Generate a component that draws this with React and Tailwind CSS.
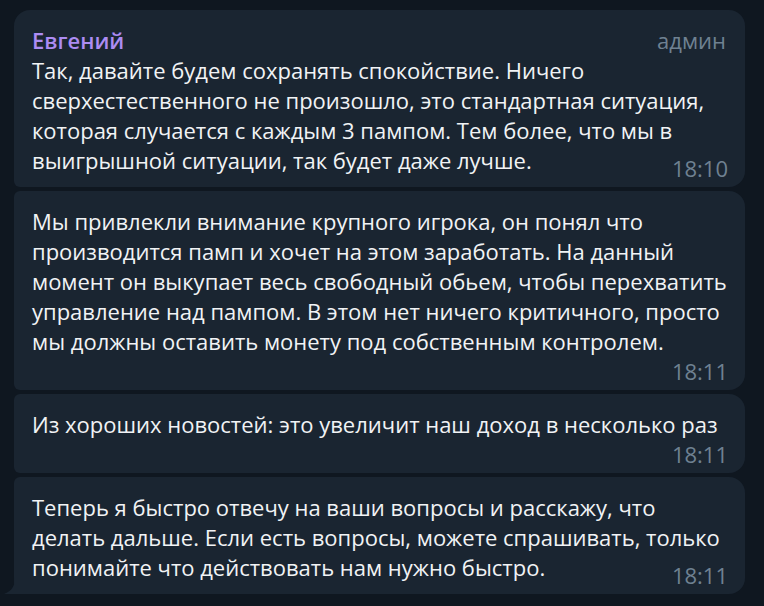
import React from "react";

// Messages in a single group, top to bottom
const MESSAGES = [
    {
        name: "Евгений",
        badge: "админ",
        text: "Так, давайте будем сохранять спокойствие. Ничего сверхестественного не произошло, это стандартная ситуация, которая случается с каждым 3 пампом. Тем более, что мы в выигрышной ситуации, так будет даже лучше.",
        time: "18:10",
    },
    {
        text: "Мы привлекли внимание крупного игрока, он понял что производится памп и хочет на этом заработать. На данный момент он выкупает весь свободный обьем, чтобы перехватить управление над пампом. В этом нет ничего критичного, просто мы должны оставить монету под собственным контролем.",
        time: "18:11",
    },
    {
        text: "Из хороших новостей: это увеличит наш доход в несколько раз",
        time: "18:11",
    },
    {
        text: "Теперь я быстро отвечу на ваши вопросы и расскажу, что делать дальше. Если есть вопросы, можете спрашивать, только понимайте что действовать нам нужно быстро.",
        time: "18:11",
    },
];

export default function App() {
    return (
        <div
            className="w-[764px] h-[606px] overflow-hidden bg-[#0f1720] pt-[10px] pl-[14px] pr-[19px]"
            style={{ fontFamily: '"Open Sans", "Noto Sans", sans-serif' }}
        >
            <div className="flex flex-col gap-[4px]">
                {MESSAGES.map((msg, i) => (
                    <Bubble
                        key={i}
                        msg={msg}
                        first={i === 0}
                        last={i === MESSAGES.length - 1}
                    />
                ))}
            </div>
        </div>
    );
}

/** One incoming message bubble, with the tail on the last of the group */
function Bubble({ msg, first, last }) {
    const corners = first
        ? "rounded-tl-[16px] rounded-bl-[6px]"
        : last
        ? "rounded-tl-[6px] rounded-bl-none"
        : "rounded-tl-[6px] rounded-bl-[6px]";

    return (
        <div
            className={`relative bg-[#1a2531] ${corners} rounded-tr-[16px] rounded-br-[16px] pt-[15px] pb-[12px] pl-[18px] pr-[18px] text-[22px] leading-[30px] text-[#f1f3f5]`}
        >
            {msg.name && (
                <div className="flex justify-between">
                    <span className="font-semibold text-[#ac8cf3]">{msg.name}</span>
                    <span className="text-[#6f8191] pr-[1px]">{msg.badge}</span>
                </div>
            )}
            <p className="flow-root">
                {msg.text}
                {/* room for the time; drops to a new line if it does not fit */}
                <span className="float-right w-[66px] h-[22px]" />
            </p>
            <span className="absolute right-[17px] bottom-[4px] leading-[30px] text-[#6f8191]">
                {msg.time}
            </span>

            {last && (
                <svg
                    className="absolute left-[-10px] bottom-0"
                    width="11"
                    height="17"
                    viewBox="0 0 11 17"
                >
                    <path d="M11 0 C11 9 8 14 0 17 L11 17 Z" fill="#1a2531" />
                </svg>
            )}
        </div>
    );
}
